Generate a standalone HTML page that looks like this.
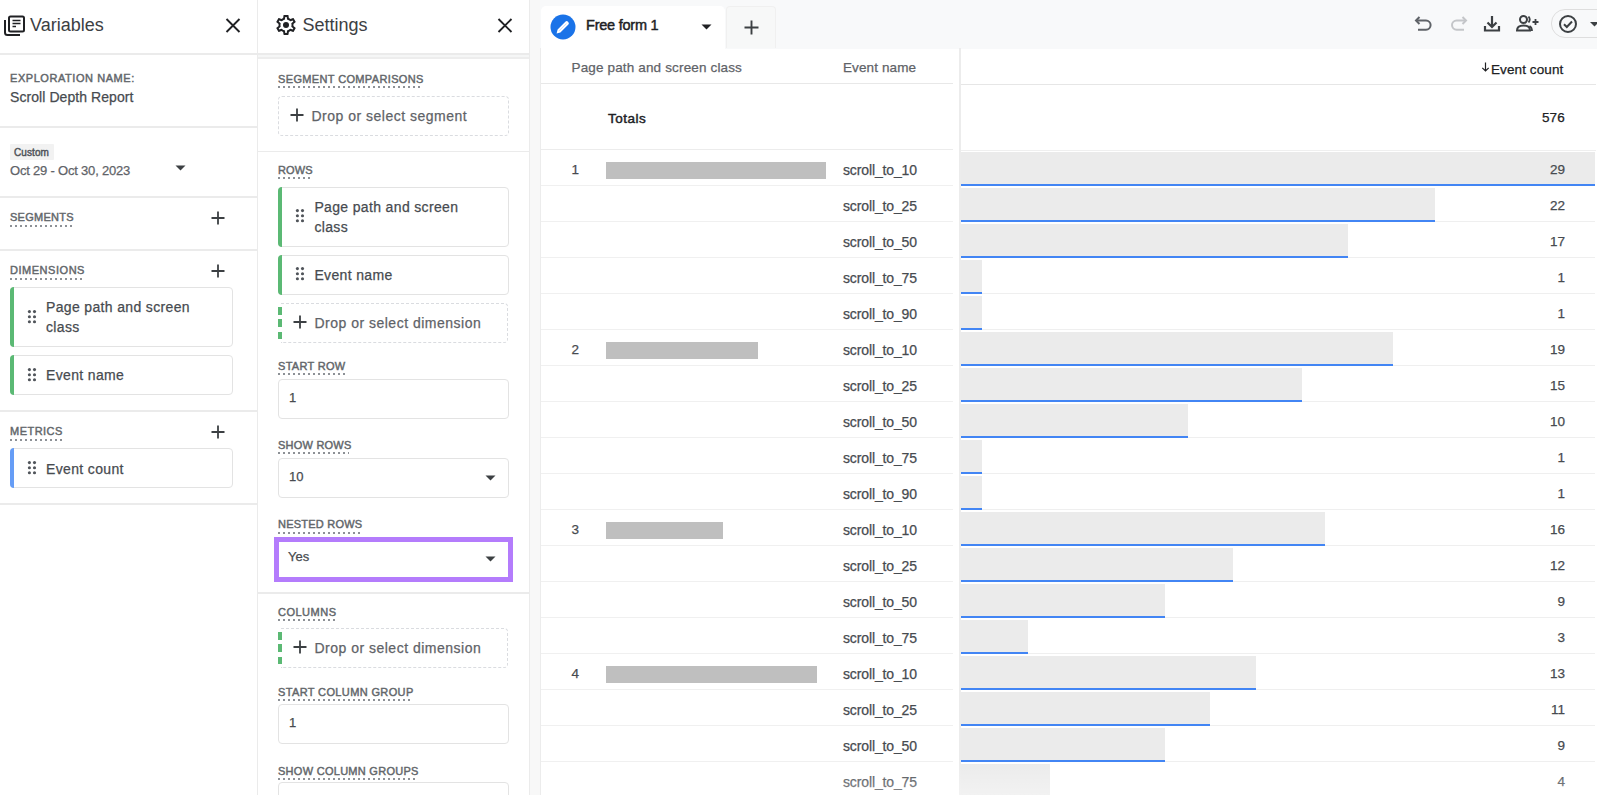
<!DOCTYPE html>
<html><head><meta charset="utf-8"><style>
html,body{margin:0;padding:0;}
body{width:1600px;height:795px;overflow:hidden;position:relative;font-family:"Liberation Sans", sans-serif;background:#f8f9fa;}
.t{position:absolute;white-space:nowrap;}
.b{position:absolute;box-sizing:content-box;}
svg.b{overflow:visible;}
</style></head><body>
<div class="b" style="left:0px;top:0px;width:1600px;height:795px;background:#f8f9fa;"></div>
<div class="b" style="left:0px;top:0px;width:257px;height:795px;background:#fff;"></div>
<div class="b" style="left:258px;top:0px;width:271px;height:795px;background:#fff;"></div>
<div class="b" style="left:257px;top:0px;width:1px;height:795px;background:#ebebeb;"></div>
<div class="b" style="left:529px;top:0px;width:1px;height:795px;background:#ebebeb;"></div>
<div class="b" style="left:530px;top:0px;width:10px;height:795px;background:#f8f8f8;"></div>
<svg class="b" style="left:3px;top:15px" width="23" height="22" viewBox="0 0 23 22">
<path d="M2 5 V17.5 Q2 20 4.5 20 H17" fill="none" stroke="#202124" stroke-width="2"/>
<rect x="6" y="1.5" width="15" height="15" rx="1.5" fill="none" stroke="#202124" stroke-width="2"/>
<path d="M9.5 5.5 H17.5 M9.5 8.5 H17.5 M9.5 11.5 H13" stroke="#202124" stroke-width="1.6"/>
</svg>
<div class="t " style="left:30px;top:16.26px;font-size:18px;line-height:18px;color:#3c4043;font-weight:400;letter-spacing:0px;">Variables</div>
<svg class="b" style="left:224px;top:17px" width="18" height="17" viewBox="0 0 18 17">
<path d="M2.5 2 L15.5 15 M15.5 2 L2.5 15" stroke="#202124" stroke-width="1.9"/></svg>
<div class="b" style="left:0px;top:53px;width:257px;height:2px;background:#ebebeb;"></div>
<div class="t " style="left:10px;top:72.99px;font-size:11px;line-height:11px;color:#63676b;font-weight:400;letter-spacing:0.56px;-webkit-text-stroke:0.45px #63676b;">EXPLORATION NAME:</div>
<div class="t " style="left:10px;top:89.65px;font-size:14px;line-height:14px;color:#474b50;font-weight:400;letter-spacing:0.07px;-webkit-text-stroke:0.25px #474b50;">Scroll Depth Report</div>
<div class="b" style="left:0px;top:126px;width:257px;height:2px;background:#ebebeb;"></div>
<div class="b" style="left:10px;top:144px;width:44px;height:16px;background:#f2f2f2;border-radius:1px;"></div>
<div class="t " style="left:14px;top:147.94px;font-size:10px;line-height:10px;color:#50545a;font-weight:400;letter-spacing:0.1px;-webkit-text-stroke:0.45px #50545a;">Custom</div>
<div class="t " style="left:10px;top:164.00px;font-size:13px;line-height:13px;color:#5f6368;font-weight:400;letter-spacing:-0.2px;-webkit-text-stroke:0.25px #5f6368;">Oct 29 - Oct 30, 2023</div>
<svg class="b" style="left:175px;top:165px" width="11" height="6" viewBox="0 0 11 6"><path d="M0.5 0.5 H10.5 L5.5 5.5 Z" fill="#3c4043"/></svg>
<div class="b" style="left:0px;top:196px;width:257px;height:2px;background:#ebebeb;"></div>
<div class="t " style="left:10px;top:212.19px;font-size:11px;line-height:11px;color:#63676b;font-weight:400;letter-spacing:0.26px;-webkit-text-stroke:0.45px #63676b;">SEGMENTS</div>
<div class="b" style="left:10px;top:224.5px;width:62px;height:2px;background:repeating-linear-gradient(90deg,#8d9196 0 2px,transparent 2px 5px);"></div>
<svg class="b" style="left:211px;top:211px" width="14" height="14" viewBox="0 0 14 14"><path d="M7.0 0.5 V13.5 M0.5 7.0 H13.5" stroke="#3c4043" stroke-width="1.8"/></svg>
<div class="b" style="left:0px;top:249px;width:257px;height:2px;background:#ebebeb;"></div>
<div class="t " style="left:10px;top:265.19px;font-size:11px;line-height:11px;color:#63676b;font-weight:400;letter-spacing:0.53px;-webkit-text-stroke:0.45px #63676b;">DIMENSIONS</div>
<div class="b" style="left:10px;top:277.5px;width:73px;height:2px;background:repeating-linear-gradient(90deg,#8d9196 0 2px,transparent 2px 5px);"></div>
<svg class="b" style="left:211px;top:264px" width="14" height="14" viewBox="0 0 14 14"><path d="M7.0 0.5 V13.5 M0.5 7.0 H13.5" stroke="#3c4043" stroke-width="1.8"/></svg>
<div class="b" style="left:10px;top:287px;width:221px;height:58px;border:1px solid #e3e3e3;border-radius:4px;background:#fff;"></div>
<div class="b" style="left:10px;top:287px;width:4px;height:60px;background:#5bb974;border-radius:4px 0 0 4px;"></div>
<svg class="b" style="left:27px;top:310px" width="10" height="14" viewBox="0 0 10 14" style="overflow:visible"><circle cx="2.4" cy="1.6" r="1.55" fill="#50545a"/><circle cx="7.5" cy="1.6" r="1.55" fill="#50545a"/><circle cx="2.4" cy="6.699999999999999" r="1.55" fill="#50545a"/><circle cx="7.5" cy="6.699999999999999" r="1.55" fill="#50545a"/><circle cx="2.4" cy="11.799999999999999" r="1.55" fill="#50545a"/><circle cx="7.5" cy="11.799999999999999" r="1.55" fill="#50545a"/></svg>
<div class="t " style="left:46px;top:300.15px;font-size:14px;line-height:14px;color:#474b50;font-weight:400;letter-spacing:0.35px;-webkit-text-stroke:0.25px #474b50;">Page path and screen</div>
<div class="t " style="left:46px;top:320.15px;font-size:14px;line-height:14px;color:#474b50;font-weight:400;letter-spacing:0.35px;-webkit-text-stroke:0.25px #474b50;">class</div>
<div class="b" style="left:10px;top:355px;width:221px;height:38px;border:1px solid #e3e3e3;border-radius:4px;background:#fff;"></div>
<div class="b" style="left:10px;top:355px;width:4px;height:40px;background:#5bb974;border-radius:4px 0 0 4px;"></div>
<svg class="b" style="left:27px;top:368px" width="10" height="14" viewBox="0 0 10 14" style="overflow:visible"><circle cx="2.4" cy="1.6" r="1.55" fill="#50545a"/><circle cx="7.5" cy="1.6" r="1.55" fill="#50545a"/><circle cx="2.4" cy="6.699999999999999" r="1.55" fill="#50545a"/><circle cx="7.5" cy="6.699999999999999" r="1.55" fill="#50545a"/><circle cx="2.4" cy="11.799999999999999" r="1.55" fill="#50545a"/><circle cx="7.5" cy="11.799999999999999" r="1.55" fill="#50545a"/></svg>
<div class="t " style="left:46px;top:368.15px;font-size:14px;line-height:14px;color:#474b50;font-weight:400;letter-spacing:0.35px;-webkit-text-stroke:0.25px #474b50;">Event name</div>
<div class="b" style="left:0px;top:410px;width:257px;height:2px;background:#ebebeb;"></div>
<div class="t " style="left:10px;top:426.19px;font-size:11px;line-height:11px;color:#63676b;font-weight:400;letter-spacing:0.48px;-webkit-text-stroke:0.45px #63676b;">METRICS</div>
<div class="b" style="left:10px;top:438.5px;width:52px;height:2px;background:repeating-linear-gradient(90deg,#8d9196 0 2px,transparent 2px 5px);"></div>
<svg class="b" style="left:211px;top:425px" width="14" height="14" viewBox="0 0 14 14"><path d="M7.0 0.5 V13.5 M0.5 7.0 H13.5" stroke="#3c4043" stroke-width="1.8"/></svg>
<div class="b" style="left:10px;top:448px;width:221px;height:38px;border:1px solid #e3e3e3;border-radius:4px;background:#fff;"></div>
<div class="b" style="left:10px;top:448px;width:4px;height:40px;background:#669df6;border-radius:4px 0 0 4px;"></div>
<svg class="b" style="left:27px;top:461px" width="10" height="14" viewBox="0 0 10 14" style="overflow:visible"><circle cx="2.4" cy="1.6" r="1.55" fill="#50545a"/><circle cx="7.5" cy="1.6" r="1.55" fill="#50545a"/><circle cx="2.4" cy="6.699999999999999" r="1.55" fill="#50545a"/><circle cx="7.5" cy="6.699999999999999" r="1.55" fill="#50545a"/><circle cx="2.4" cy="11.799999999999999" r="1.55" fill="#50545a"/><circle cx="7.5" cy="11.799999999999999" r="1.55" fill="#50545a"/></svg>
<div class="t " style="left:46px;top:461.75px;font-size:14px;line-height:14px;color:#474b50;font-weight:400;letter-spacing:0.35px;-webkit-text-stroke:0.25px #474b50;">Event count</div>
<div class="b" style="left:0px;top:503px;width:257px;height:2px;background:#ebebeb;"></div>
<svg class="b" style="left:274px;top:13px" width="24" height="24" viewBox="0 0 24 24">
<path fill="#202124" d="M19.43 12.98c.04-.32.07-.64.07-.98 0-.34-.03-.66-.07-.98l2.11-1.65c.19-.15.24-.42.12-.64l-2-3.46c-.09-.16-.26-.25-.44-.25-.06 0-.12.01-.17.03l-2.49 1c-.52-.4-1.08-.73-1.69-.98l-.38-2.65C14.46 2.18 14.25 2 14 2h-4c-.25 0-.46.18-.49.42l-.38 2.65c-.61.25-1.17.59-1.69.98l-2.49-1c-.06-.02-.12-.03-.18-.03-.17 0-.34.09-.43.25l-2 3.46c-.13.22-.07.49.12.64l2.11 1.65c-.04.32-.07.65-.07.98 0 .33.03.66.07.98l-2.11 1.65c-.19.15-.24.42-.12.64l2 3.46c.09.16.26.25.44.25.06 0 .12-.01.17-.03l2.49-1c.52.4 1.08.73 1.69.98l.38 2.65c.03.24.24.42.49.42h4c.25 0 .46-.18.49-.42l.38-2.650c.61-.25 1.17-.59 1.69-.98l2.49 1c.06.02.12.03.18.03.17 0 .34-.09.43-.25l2-3.460c.12-.22.07-.49-.12-.64l-2.11-1.65zm-1.98-1.71c.04.31.05.52.05.73 0 .21-.02.43-.05.73l-.14 1.13.89.7 1.08.84-.7 1.21-1.27-.51-1.04-.42-.9.68c-.43.32-.84.56-1.25.73l-1.06.43-.16 1.13-.2 1.35h-1.4l-.19-1.35-.16-1.13-1.06-.43c-.43-.18-.83-.41-1.230-.71l-.91-.7-1.06.43-1.27.51-.7-1.21 1.08-.84.89-.7-.14-1.13c-.03-.31-.05-.54-.05-.74s.02-.43.05-.73l.14-1.13-.89-.7-1.08-.84.7-1.21 1.27.51 1.04.42.9-.68c.43-.32.84-.56 1.25-.73l1.06-.43.16-1.13.2-1.35h1.39l.19 1.35.16 1.13 1.06.43c.43.18.83.41 1.23.71l.91.7 1.06-.43 1.27-.51.7 1.21-1.07.85-.89.7.14 1.13z"/>
<circle cx="12" cy="12" r="3" fill="#202124"/></svg>
<div class="t " style="left:302.5px;top:16.46px;font-size:18px;line-height:18px;color:#3c4043;font-weight:400;letter-spacing:0px;">Settings</div>
<svg class="b" style="left:496px;top:17px" width="18" height="17" viewBox="0 0 18 17">
<path d="M2.5 2 L15.5 15 M15.5 2 L2.5 15" stroke="#202124" stroke-width="1.9"/></svg>
<div class="b" style="left:258px;top:53px;width:271px;height:1.5px;background:#ebebeb;"></div>
<div class="b" style="left:258px;top:54.5px;width:271px;height:2.5px;background:#f5f6f6;"></div>
<div class="b" style="left:258px;top:57px;width:271px;height:1.5px;background:#ededed;"></div>
<div class="t " style="left:278px;top:73.79px;font-size:11px;line-height:11px;color:#63676b;font-weight:400;letter-spacing:0.36px;-webkit-text-stroke:0.45px #63676b;">SEGMENT COMPARISONS</div>
<div class="b" style="left:278px;top:86.1px;width:144px;height:2px;background:repeating-linear-gradient(90deg,#8d9196 0 2px,transparent 2px 5px);"></div>
<div class="b" style="left:278px;top:96px;width:229px;height:38px;border:1px dashed #dadce0;border-radius:4px;"></div>
<svg class="b" style="left:290px;top:108px" width="14" height="14" viewBox="0 0 14 14"><path d="M7.0 0.5 V13.5 M0.5 7.0 H13.5" stroke="#3c4043" stroke-width="1.8"/></svg>
<div class="t " style="left:311.5px;top:109.15px;font-size:14px;line-height:14px;color:#5f6368;font-weight:400;letter-spacing:0.5px;-webkit-text-stroke:0.25px #5f6368;">Drop or select segment</div>
<div class="b" style="left:258px;top:150.5px;width:271px;height:1.5px;background:#ebebeb;"></div>
<div class="t " style="left:278px;top:164.79px;font-size:11px;line-height:11px;color:#63676b;font-weight:400;letter-spacing:0.1px;-webkit-text-stroke:0.45px #63676b;">ROWS</div>
<div class="b" style="left:278px;top:177.1px;width:33px;height:2px;background:repeating-linear-gradient(90deg,#8d9196 0 2px,transparent 2px 5px);"></div>
<div class="b" style="left:278px;top:187px;width:229px;height:58px;border:1px solid #e3e3e3;border-radius:4px;background:#fff;"></div>
<div class="b" style="left:278px;top:187px;width:4px;height:60px;background:#5bb974;border-radius:4px 0 0 4px;"></div>
<svg class="b" style="left:295px;top:209px" width="10" height="14" viewBox="0 0 10 14" style="overflow:visible"><circle cx="2.4" cy="1.6" r="1.55" fill="#50545a"/><circle cx="7.5" cy="1.6" r="1.55" fill="#50545a"/><circle cx="2.4" cy="6.699999999999999" r="1.55" fill="#50545a"/><circle cx="7.5" cy="6.699999999999999" r="1.55" fill="#50545a"/><circle cx="2.4" cy="11.799999999999999" r="1.55" fill="#50545a"/><circle cx="7.5" cy="11.799999999999999" r="1.55" fill="#50545a"/></svg>
<div class="t " style="left:314.4px;top:200.15px;font-size:14px;line-height:14px;color:#474b50;font-weight:400;letter-spacing:0.35px;-webkit-text-stroke:0.25px #474b50;">Page path and screen</div>
<div class="t " style="left:314.4px;top:219.75px;font-size:14px;line-height:14px;color:#474b50;font-weight:400;letter-spacing:0.35px;-webkit-text-stroke:0.25px #474b50;">class</div>
<div class="b" style="left:278px;top:255px;width:229px;height:38px;border:1px solid #e3e3e3;border-radius:4px;background:#fff;"></div>
<div class="b" style="left:278px;top:255px;width:4px;height:40px;background:#5bb974;border-radius:4px 0 0 4px;"></div>
<svg class="b" style="left:295px;top:267.3px" width="10" height="14" viewBox="0 0 10 14" style="overflow:visible"><circle cx="2.4" cy="1.6" r="1.55" fill="#50545a"/><circle cx="7.5" cy="1.6" r="1.55" fill="#50545a"/><circle cx="2.4" cy="6.699999999999999" r="1.55" fill="#50545a"/><circle cx="7.5" cy="6.699999999999999" r="1.55" fill="#50545a"/><circle cx="2.4" cy="11.799999999999999" r="1.55" fill="#50545a"/><circle cx="7.5" cy="11.799999999999999" r="1.55" fill="#50545a"/></svg>
<div class="t " style="left:314.4px;top:267.55px;font-size:14px;line-height:14px;color:#474b50;font-weight:400;letter-spacing:0.35px;-webkit-text-stroke:0.25px #474b50;">Event name</div>
<div class="b" style="left:281px;top:303px;width:226px;height:38px;border:1px dashed #dadce0;border-left:none;border-radius:0 4px 4px 0;"></div>
<div class="b" style="left:278px;top:307.0px;width:4px;height:7.5px;background:#5bb974;"></div>
<div class="b" style="left:278px;top:319.3px;width:4px;height:7.5px;background:#5bb974;"></div>
<div class="b" style="left:278px;top:331.6px;width:4px;height:7.5px;background:#5bb974;"></div>
<svg class="b" style="left:293px;top:315px" width="14" height="14" viewBox="0 0 14 14"><path d="M7.0 0.5 V13.5 M0.5 7.0 H13.5" stroke="#3c4043" stroke-width="1.8"/></svg>
<div class="t " style="left:314.4px;top:316.15px;font-size:14px;line-height:14px;color:#5f6368;font-weight:400;letter-spacing:0.5px;-webkit-text-stroke:0.25px #5f6368;">Drop or select dimension</div>
<div class="t " style="left:278px;top:360.79px;font-size:11px;line-height:11px;color:#63676b;font-weight:400;letter-spacing:0.3px;-webkit-text-stroke:0.45px #63676b;">START ROW</div>
<div class="b" style="left:278px;top:373.1px;width:70px;height:2px;background:repeating-linear-gradient(90deg,#8d9196 0 2px,transparent 2px 5px);"></div>
<div class="b" style="left:278px;top:379px;width:229px;height:38px;border:1px solid #e3e3e3;border-radius:4px;background:#fff;"></div>
<div class="t " style="left:289px;top:391.00px;font-size:13px;line-height:13px;color:#474b50;font-weight:400;letter-spacing:0px;-webkit-text-stroke:0.25px #474b50;">1</div>
<div class="t " style="left:278px;top:439.79px;font-size:11px;line-height:11px;color:#63676b;font-weight:400;letter-spacing:0.22px;-webkit-text-stroke:0.45px #63676b;">SHOW ROWS</div>
<div class="b" style="left:278px;top:452.1px;width:71px;height:2px;background:repeating-linear-gradient(90deg,#8d9196 0 2px,transparent 2px 5px);"></div>
<div class="b" style="left:278px;top:458px;width:229px;height:38px;border:1px solid #e3e3e3;border-radius:4px;background:#fff;"></div>
<div class="t " style="left:289px;top:470.00px;font-size:13px;line-height:13px;color:#474b50;font-weight:400;letter-spacing:0px;-webkit-text-stroke:0.25px #474b50;">10</div>
<svg class="b" style="left:485px;top:475px" width="11" height="6" viewBox="0 0 11 6"><path d="M0.5 0.5 H10.5 L5.5 5.5 Z" fill="#3c4043"/></svg>
<div class="t " style="left:278px;top:519.19px;font-size:11px;line-height:11px;color:#63676b;font-weight:400;letter-spacing:0.22px;-webkit-text-stroke:0.45px #63676b;">NESTED ROWS</div>
<div class="b" style="left:278px;top:531.5px;width:83px;height:2px;background:repeating-linear-gradient(90deg,#8d9196 0 2px,transparent 2px 5px);"></div>
<div class="b" style="left:274px;top:537px;width:229px;height:35px;border:5px solid #b47cfc;background:#fff;"></div>
<div class="t " style="left:288px;top:550.40px;font-size:13px;line-height:13px;color:#474b50;font-weight:400;letter-spacing:0px;-webkit-text-stroke:0.25px #474b50;">Yes</div>
<svg class="b" style="left:485px;top:556px" width="11" height="6" viewBox="0 0 11 6"><path d="M0.5 0.5 H10.5 L5.5 5.5 Z" fill="#3c4043"/></svg>
<div class="b" style="left:258px;top:592px;width:271px;height:1.5px;background:#ebebeb;"></div>
<div class="t " style="left:278px;top:606.59px;font-size:11px;line-height:11px;color:#63676b;font-weight:400;letter-spacing:0.5px;-webkit-text-stroke:0.45px #63676b;">COLUMNS</div>
<div class="b" style="left:278px;top:618.9px;width:57px;height:2px;background:repeating-linear-gradient(90deg,#8d9196 0 2px,transparent 2px 5px);"></div>
<div class="b" style="left:281px;top:628px;width:226px;height:38px;border:1px dashed #dadce0;border-left:none;border-radius:0 4px 4px 0;"></div>
<div class="b" style="left:278px;top:632.0px;width:4px;height:7.5px;background:#5bb974;"></div>
<div class="b" style="left:278px;top:644.3px;width:4px;height:7.5px;background:#5bb974;"></div>
<div class="b" style="left:278px;top:656.6px;width:4px;height:7.5px;background:#5bb974;"></div>
<svg class="b" style="left:293px;top:640px" width="14" height="14" viewBox="0 0 14 14"><path d="M7.0 0.5 V13.5 M0.5 7.0 H13.5" stroke="#3c4043" stroke-width="1.8"/></svg>
<div class="t " style="left:314.4px;top:641.15px;font-size:14px;line-height:14px;color:#5f6368;font-weight:400;letter-spacing:0.5px;-webkit-text-stroke:0.25px #5f6368;">Drop or select dimension</div>
<div class="t " style="left:278px;top:686.79px;font-size:11px;line-height:11px;color:#63676b;font-weight:400;letter-spacing:0.37px;-webkit-text-stroke:0.45px #63676b;">START COLUMN GROUP</div>
<div class="b" style="left:278px;top:699.1px;width:134px;height:2px;background:repeating-linear-gradient(90deg,#8d9196 0 2px,transparent 2px 5px);"></div>
<div class="b" style="left:278px;top:703.6px;width:229px;height:38px;border:1px solid #e3e3e3;border-radius:4px;background:#fff;"></div>
<div class="t " style="left:289px;top:715.60px;font-size:13px;line-height:13px;color:#474b50;font-weight:400;letter-spacing:0px;-webkit-text-stroke:0.25px #474b50;">1</div>
<div class="t " style="left:278px;top:765.59px;font-size:11px;line-height:11px;color:#63676b;font-weight:400;letter-spacing:0.28px;-webkit-text-stroke:0.45px #63676b;">SHOW COLUMN GROUPS</div>
<div class="b" style="left:278px;top:777.9px;width:139px;height:2px;background:repeating-linear-gradient(90deg,#8d9196 0 2px,transparent 2px 5px);"></div>
<div class="b" style="left:278px;top:782px;width:229px;height:38px;border:1px solid #e3e3e3;border-radius:4px;background:#fff;"></div>
<div class="b" style="left:541px;top:6px;width:184px;height:44px;background:#fff;border-radius:5px 5px 0 0;"></div>
<div class="b" style="left:726px;top:6px;width:48px;height:41px;background:#f7f8f8;border-radius:4px 4px 0 0;border:1px solid #f0f0f0;border-bottom:none;"></div>
<svg class="b" style="left:550px;top:14px" width="26" height="26" viewBox="0 0 26 26">
<circle cx="13" cy="13" r="12.5" fill="#1a73e8"/>
<path d="M6.6 19.4 L7.6 15.6 L15.6 7.6 Q16.6 6.6 17.8 7.6 L18.4 8.2 Q19.4 9.4 18.4 10.4 L10.4 18.4 Z" fill="#fff"/>
<path d="M9.2 16.8 L16.4 9.6" stroke="#b9d2f8" stroke-width="0.7"/></svg>
<div class="t " style="left:586px;top:18.33px;font-size:14.5px;line-height:14.5px;color:#202124;font-weight:400;letter-spacing:-0.23px;-webkit-text-stroke:0.45px #202124;">Free form 1</div>
<svg class="b" style="left:701px;top:24px" width="11" height="6" viewBox="0 0 11 6"><path d="M0.5 0.5 H10.5 L5.5 5.5 Z" fill="#202124"/></svg>
<svg class="b" style="left:744px;top:20px" width="15" height="15" viewBox="0 0 15 15"><path d="M7.5 0.5 V14.5 M0.5 7.5 H14.5" stroke="#3c4043" stroke-width="1.9"/></svg>
<svg class="b" style="left:1413px;top:14px" width="20" height="20" viewBox="0 0 20 20">
<path d="M3 6.5 H13 A4.6 4.6 0 0 1 13 15.7 H5" fill="none" stroke="#5f6368" stroke-width="2"/>
<path d="M6.5 3 L3 6.5 L6.5 10" fill="none" stroke="#5f6368" stroke-width="2"/></svg>
<svg class="b" style="left:1449px;top:14px" width="20" height="20" viewBox="0 0 20 20">
<path d="M17 6.5 H7.6 A4.6 4.6 0 0 0 7.6 15.7 H15" fill="none" stroke="#c4c6c9" stroke-width="2"/>
<path d="M13.5 3 L17 6.5 L13.5 10" fill="none" stroke="#c4c6c9" stroke-width="2"/></svg>
<svg class="b" style="left:1482px;top:14px" width="20" height="20" viewBox="0 0 20 20">
<path d="M10 2 V13 M5.5 8.5 L10 13 L14.5 8.5" fill="none" stroke="#3c4043" stroke-width="2.2"/>
<path d="M3 12 V16.5 H17 V12" fill="none" stroke="#3c4043" stroke-width="2.2"/></svg>
<svg class="b" style="left:1515px;top:14px" width="27" height="20" viewBox="0 0 27 20">
<circle cx="8.5" cy="5.5" r="3.5" fill="none" stroke="#3c4043" stroke-width="2"/>
<path d="M2 16.5 Q2 11.5 8.5 11.5 Q15 11.5 15 16.5 Z" fill="none" stroke="#3c4043" stroke-width="2"/>
<path d="M13.5 2.5 Q16 5.5 13.5 8.5 M17 17 Q17 13.5 14.5 12" fill="none" stroke="#3c4043" stroke-width="1.8"/>
<path d="M20.5 5 V11 M17.5 8 H23.5" stroke="#3c4043" stroke-width="1.8"/></svg>
<div class="b" style="left:1551px;top:9px;width:60px;height:27px;border:1px solid #dedede;border-radius:14px;"></div>
<svg class="b" style="left:1558px;top:14px" width="20" height="20" viewBox="0 0 20 20">
<circle cx="10" cy="10" r="8" fill="none" stroke="#3c4043" stroke-width="2"/>
<path d="M6 10.3 L8.8 13 L14 7.5" fill="none" stroke="#3c4043" stroke-width="2"/></svg>
<svg class="b" style="left:1590px;top:22px" width="9" height="5" viewBox="0 0 9 5"><path d="M0 0 H9 L4.5 4.5 Z" fill="#3c4043"/></svg>
<div class="b" style="left:1596.5px;top:0px;width:3.5px;height:795px;background:#fff;"></div>
<div class="b" style="left:541px;top:48.5px;width:1056px;height:747px;background:#fff;"></div>
<div class="b" style="left:540px;top:48px;width:1px;height:747px;background:#ececec;"></div>
<div class="b" style="left:959px;top:48px;width:1.5px;height:747px;background:#ececec;"></div>
<div class="t " style="left:571.5px;top:61.07px;font-size:13.5px;line-height:13.5px;color:#5f6368;font-weight:400;letter-spacing:0.15px;-webkit-text-stroke:0.25px #5f6368;">Page path and screen class</div>
<div class="t " style="left:843px;top:60.57px;font-size:13.5px;line-height:13.5px;color:#5f6368;font-weight:400;letter-spacing:0.12px;-webkit-text-stroke:0.25px #5f6368;">Event name</div>
<div class="t " style="left:1491px;top:62.57px;font-size:13.5px;line-height:13.5px;color:#202124;font-weight:400;letter-spacing:0.1px;-webkit-text-stroke:0.25px #202124;">Event count</div>
<svg class="b" style="left:1481px;top:62px" width="9" height="10" viewBox="0 0 9 10"><path d="M4.5 0.5 V9 M1.3 5.8 L4.5 9 L7.7 5.8" fill="none" stroke="#202124" stroke-width="1.2"/></svg>
<div class="b" style="left:541px;top:83px;width:412px;height:1px;background:#e8e8e8;"></div>
<div class="b" style="left:961px;top:83.5px;width:635px;height:1.5px;background:#e6e6e6;"></div>
<div class="t " style="left:608px;top:112.07px;font-size:13.5px;line-height:13.5px;color:#202124;font-weight:400;letter-spacing:0.5px;-webkit-text-stroke:0.45px #202124;">Totals</div>
<div class="t " style="right:35px;text-align:right;top:111.07px;font-size:13.5px;line-height:13.5px;color:#202124;font-weight:400;letter-spacing:0.2px;-webkit-text-stroke:0.25px #202124;">576</div>
<div class="b" style="left:541px;top:149px;width:412px;height:1px;background:#ececec;"></div>
<div class="b" style="left:961px;top:149.5px;width:635px;height:1px;background:#efefef;"></div>
<div class="t " style="left:571.5px;top:163.07px;font-size:13.5px;line-height:13.5px;color:#474b50;font-weight:400;letter-spacing:0px;-webkit-text-stroke:0.25px #474b50;">1</div>
<div class="b" style="left:606px;top:161.5px;width:220px;height:17.5px;background:#bfbfbf;"></div>
<div class="t " style="left:843px;top:162.95px;font-size:14px;line-height:14px;color:#474b50;font-weight:400;letter-spacing:-0.13px;-webkit-text-stroke:0.25px #474b50;">scroll_to_10</div>
<div class="b" style="left:961px;top:152px;width:634px;height:32px;background:#ebebeb;"></div>
<div class="b" style="left:961px;top:184px;width:634px;height:2px;background:#4285f4;"></div>
<div class="t " style="right:35px;text-align:right;top:162.57px;font-size:13.5px;line-height:13.5px;color:#474b50;font-weight:400;letter-spacing:0px;-webkit-text-stroke:0.25px #474b50;">29</div>
<div class="b" style="left:541px;top:185px;width:412px;height:1px;background:#f0f0f0;"></div>
<div class="t " style="left:843px;top:198.95px;font-size:14px;line-height:14px;color:#474b50;font-weight:400;letter-spacing:-0.13px;-webkit-text-stroke:0.25px #474b50;">scroll_to_25</div>
<div class="b" style="left:961px;top:188px;width:474px;height:32px;background:#ebebeb;"></div>
<div class="b" style="left:961px;top:220px;width:474px;height:2px;background:#4285f4;"></div>
<div class="t " style="right:35px;text-align:right;top:198.57px;font-size:13.5px;line-height:13.5px;color:#474b50;font-weight:400;letter-spacing:0px;-webkit-text-stroke:0.25px #474b50;">22</div>
<div class="b" style="left:541px;top:221px;width:412px;height:1px;background:#f0f0f0;"></div>
<div class="b" style="left:1435px;top:221px;width:160px;height:1px;background:#efefef;"></div>
<div class="t " style="left:843px;top:234.95px;font-size:14px;line-height:14px;color:#474b50;font-weight:400;letter-spacing:-0.13px;-webkit-text-stroke:0.25px #474b50;">scroll_to_50</div>
<div class="b" style="left:961px;top:224px;width:387px;height:32px;background:#ebebeb;"></div>
<div class="b" style="left:961px;top:256px;width:387px;height:2px;background:#4285f4;"></div>
<div class="t " style="right:35px;text-align:right;top:234.57px;font-size:13.5px;line-height:13.5px;color:#474b50;font-weight:400;letter-spacing:0px;-webkit-text-stroke:0.25px #474b50;">17</div>
<div class="b" style="left:541px;top:257px;width:412px;height:1px;background:#f0f0f0;"></div>
<div class="b" style="left:1348px;top:257px;width:247px;height:1px;background:#efefef;"></div>
<div class="t " style="left:843px;top:270.95px;font-size:14px;line-height:14px;color:#474b50;font-weight:400;letter-spacing:-0.13px;-webkit-text-stroke:0.25px #474b50;">scroll_to_75</div>
<div class="b" style="left:961px;top:260px;width:21px;height:32px;background:#ebebeb;"></div>
<div class="b" style="left:961px;top:292px;width:21px;height:2px;background:#4285f4;"></div>
<div class="t " style="right:35px;text-align:right;top:270.57px;font-size:13.5px;line-height:13.5px;color:#474b50;font-weight:400;letter-spacing:0px;-webkit-text-stroke:0.25px #474b50;">1</div>
<div class="b" style="left:541px;top:293px;width:412px;height:1px;background:#f0f0f0;"></div>
<div class="b" style="left:982px;top:293px;width:613px;height:1px;background:#efefef;"></div>
<div class="t " style="left:843px;top:306.95px;font-size:14px;line-height:14px;color:#474b50;font-weight:400;letter-spacing:-0.13px;-webkit-text-stroke:0.25px #474b50;">scroll_to_90</div>
<div class="b" style="left:961px;top:296px;width:21px;height:32px;background:#ebebeb;"></div>
<div class="b" style="left:961px;top:328px;width:21px;height:2px;background:#4285f4;"></div>
<div class="t " style="right:35px;text-align:right;top:306.57px;font-size:13.5px;line-height:13.5px;color:#474b50;font-weight:400;letter-spacing:0px;-webkit-text-stroke:0.25px #474b50;">1</div>
<div class="b" style="left:541px;top:329px;width:412px;height:1px;background:#f0f0f0;"></div>
<div class="b" style="left:982px;top:329px;width:613px;height:1px;background:#efefef;"></div>
<div class="t " style="left:571.5px;top:343.07px;font-size:13.5px;line-height:13.5px;color:#474b50;font-weight:400;letter-spacing:0px;-webkit-text-stroke:0.25px #474b50;">2</div>
<div class="b" style="left:606px;top:341.5px;width:152px;height:17.5px;background:#bfbfbf;"></div>
<div class="t " style="left:843px;top:342.95px;font-size:14px;line-height:14px;color:#474b50;font-weight:400;letter-spacing:-0.13px;-webkit-text-stroke:0.25px #474b50;">scroll_to_10</div>
<div class="b" style="left:961px;top:332px;width:432px;height:32px;background:#ebebeb;"></div>
<div class="b" style="left:961px;top:364px;width:432px;height:2px;background:#4285f4;"></div>
<div class="t " style="right:35px;text-align:right;top:342.57px;font-size:13.5px;line-height:13.5px;color:#474b50;font-weight:400;letter-spacing:0px;-webkit-text-stroke:0.25px #474b50;">19</div>
<div class="b" style="left:541px;top:365px;width:412px;height:1px;background:#f0f0f0;"></div>
<div class="b" style="left:1393px;top:365px;width:202px;height:1px;background:#efefef;"></div>
<div class="t " style="left:843px;top:378.95px;font-size:14px;line-height:14px;color:#474b50;font-weight:400;letter-spacing:-0.13px;-webkit-text-stroke:0.25px #474b50;">scroll_to_25</div>
<div class="b" style="left:961px;top:368px;width:341px;height:32px;background:#ebebeb;"></div>
<div class="b" style="left:961px;top:400px;width:341px;height:2px;background:#4285f4;"></div>
<div class="t " style="right:35px;text-align:right;top:378.57px;font-size:13.5px;line-height:13.5px;color:#474b50;font-weight:400;letter-spacing:0px;-webkit-text-stroke:0.25px #474b50;">15</div>
<div class="b" style="left:541px;top:401px;width:412px;height:1px;background:#f0f0f0;"></div>
<div class="b" style="left:1302px;top:401px;width:293px;height:1px;background:#efefef;"></div>
<div class="t " style="left:843px;top:414.95px;font-size:14px;line-height:14px;color:#474b50;font-weight:400;letter-spacing:-0.13px;-webkit-text-stroke:0.25px #474b50;">scroll_to_50</div>
<div class="b" style="left:961px;top:404px;width:227px;height:32px;background:#ebebeb;"></div>
<div class="b" style="left:961px;top:436px;width:227px;height:2px;background:#4285f4;"></div>
<div class="t " style="right:35px;text-align:right;top:414.57px;font-size:13.5px;line-height:13.5px;color:#474b50;font-weight:400;letter-spacing:0px;-webkit-text-stroke:0.25px #474b50;">10</div>
<div class="b" style="left:541px;top:437px;width:412px;height:1px;background:#f0f0f0;"></div>
<div class="b" style="left:1188px;top:437px;width:407px;height:1px;background:#efefef;"></div>
<div class="t " style="left:843px;top:450.95px;font-size:14px;line-height:14px;color:#474b50;font-weight:400;letter-spacing:-0.13px;-webkit-text-stroke:0.25px #474b50;">scroll_to_75</div>
<div class="b" style="left:961px;top:440px;width:21px;height:32px;background:#ebebeb;"></div>
<div class="b" style="left:961px;top:472px;width:21px;height:2px;background:#4285f4;"></div>
<div class="t " style="right:35px;text-align:right;top:450.57px;font-size:13.5px;line-height:13.5px;color:#474b50;font-weight:400;letter-spacing:0px;-webkit-text-stroke:0.25px #474b50;">1</div>
<div class="b" style="left:541px;top:473px;width:412px;height:1px;background:#f0f0f0;"></div>
<div class="b" style="left:982px;top:473px;width:613px;height:1px;background:#efefef;"></div>
<div class="t " style="left:843px;top:486.95px;font-size:14px;line-height:14px;color:#474b50;font-weight:400;letter-spacing:-0.13px;-webkit-text-stroke:0.25px #474b50;">scroll_to_90</div>
<div class="b" style="left:961px;top:476px;width:21px;height:32px;background:#ebebeb;"></div>
<div class="b" style="left:961px;top:508px;width:21px;height:2px;background:#4285f4;"></div>
<div class="t " style="right:35px;text-align:right;top:486.57px;font-size:13.5px;line-height:13.5px;color:#474b50;font-weight:400;letter-spacing:0px;-webkit-text-stroke:0.25px #474b50;">1</div>
<div class="b" style="left:541px;top:509px;width:412px;height:1px;background:#f0f0f0;"></div>
<div class="b" style="left:982px;top:509px;width:613px;height:1px;background:#efefef;"></div>
<div class="t " style="left:571.5px;top:523.07px;font-size:13.5px;line-height:13.5px;color:#474b50;font-weight:400;letter-spacing:0px;-webkit-text-stroke:0.25px #474b50;">3</div>
<div class="b" style="left:606px;top:521.5px;width:117px;height:17.5px;background:#bfbfbf;"></div>
<div class="t " style="left:843px;top:522.95px;font-size:14px;line-height:14px;color:#474b50;font-weight:400;letter-spacing:-0.13px;-webkit-text-stroke:0.25px #474b50;">scroll_to_10</div>
<div class="b" style="left:961px;top:512px;width:364px;height:32px;background:#ebebeb;"></div>
<div class="b" style="left:961px;top:544px;width:364px;height:2px;background:#4285f4;"></div>
<div class="t " style="right:35px;text-align:right;top:522.57px;font-size:13.5px;line-height:13.5px;color:#474b50;font-weight:400;letter-spacing:0px;-webkit-text-stroke:0.25px #474b50;">16</div>
<div class="b" style="left:541px;top:545px;width:412px;height:1px;background:#f0f0f0;"></div>
<div class="b" style="left:1325px;top:545px;width:270px;height:1px;background:#efefef;"></div>
<div class="t " style="left:843px;top:558.95px;font-size:14px;line-height:14px;color:#474b50;font-weight:400;letter-spacing:-0.13px;-webkit-text-stroke:0.25px #474b50;">scroll_to_25</div>
<div class="b" style="left:961px;top:548px;width:272px;height:32px;background:#ebebeb;"></div>
<div class="b" style="left:961px;top:580px;width:272px;height:2px;background:#4285f4;"></div>
<div class="t " style="right:35px;text-align:right;top:558.57px;font-size:13.5px;line-height:13.5px;color:#474b50;font-weight:400;letter-spacing:0px;-webkit-text-stroke:0.25px #474b50;">12</div>
<div class="b" style="left:541px;top:581px;width:412px;height:1px;background:#f0f0f0;"></div>
<div class="b" style="left:1233px;top:581px;width:362px;height:1px;background:#efefef;"></div>
<div class="t " style="left:843px;top:594.95px;font-size:14px;line-height:14px;color:#474b50;font-weight:400;letter-spacing:-0.13px;-webkit-text-stroke:0.25px #474b50;">scroll_to_50</div>
<div class="b" style="left:961px;top:584px;width:204px;height:32px;background:#ebebeb;"></div>
<div class="b" style="left:961px;top:616px;width:204px;height:2px;background:#4285f4;"></div>
<div class="t " style="right:35px;text-align:right;top:594.57px;font-size:13.5px;line-height:13.5px;color:#474b50;font-weight:400;letter-spacing:0px;-webkit-text-stroke:0.25px #474b50;">9</div>
<div class="b" style="left:541px;top:617px;width:412px;height:1px;background:#f0f0f0;"></div>
<div class="b" style="left:1165px;top:617px;width:430px;height:1px;background:#efefef;"></div>
<div class="t " style="left:843px;top:630.95px;font-size:14px;line-height:14px;color:#474b50;font-weight:400;letter-spacing:-0.13px;-webkit-text-stroke:0.25px #474b50;">scroll_to_75</div>
<div class="b" style="left:961px;top:620px;width:67px;height:32px;background:#ebebeb;"></div>
<div class="b" style="left:961px;top:652px;width:67px;height:2px;background:#4285f4;"></div>
<div class="t " style="right:35px;text-align:right;top:630.57px;font-size:13.5px;line-height:13.5px;color:#474b50;font-weight:400;letter-spacing:0px;-webkit-text-stroke:0.25px #474b50;">3</div>
<div class="b" style="left:541px;top:653px;width:412px;height:1px;background:#f0f0f0;"></div>
<div class="b" style="left:1028px;top:653px;width:567px;height:1px;background:#efefef;"></div>
<div class="t " style="left:571.5px;top:667.07px;font-size:13.5px;line-height:13.5px;color:#474b50;font-weight:400;letter-spacing:0px;-webkit-text-stroke:0.25px #474b50;">4</div>
<div class="b" style="left:606px;top:665.5px;width:211px;height:17.5px;background:#bfbfbf;"></div>
<div class="t " style="left:843px;top:666.95px;font-size:14px;line-height:14px;color:#474b50;font-weight:400;letter-spacing:-0.13px;-webkit-text-stroke:0.25px #474b50;">scroll_to_10</div>
<div class="b" style="left:961px;top:656px;width:295px;height:32px;background:#ebebeb;"></div>
<div class="b" style="left:961px;top:688px;width:295px;height:2px;background:#4285f4;"></div>
<div class="t " style="right:35px;text-align:right;top:666.57px;font-size:13.5px;line-height:13.5px;color:#474b50;font-weight:400;letter-spacing:0px;-webkit-text-stroke:0.25px #474b50;">13</div>
<div class="b" style="left:541px;top:689px;width:412px;height:1px;background:#f0f0f0;"></div>
<div class="b" style="left:1256px;top:689px;width:339px;height:1px;background:#efefef;"></div>
<div class="t " style="left:843px;top:702.95px;font-size:14px;line-height:14px;color:#474b50;font-weight:400;letter-spacing:-0.13px;-webkit-text-stroke:0.25px #474b50;">scroll_to_25</div>
<div class="b" style="left:961px;top:692px;width:249px;height:32px;background:#ebebeb;"></div>
<div class="b" style="left:961px;top:724px;width:249px;height:2px;background:#4285f4;"></div>
<div class="t " style="right:35px;text-align:right;top:702.57px;font-size:13.5px;line-height:13.5px;color:#474b50;font-weight:400;letter-spacing:0px;-webkit-text-stroke:0.25px #474b50;">11</div>
<div class="b" style="left:541px;top:725px;width:412px;height:1px;background:#f0f0f0;"></div>
<div class="b" style="left:1210px;top:725px;width:385px;height:1px;background:#efefef;"></div>
<div class="t " style="left:843px;top:738.95px;font-size:14px;line-height:14px;color:#474b50;font-weight:400;letter-spacing:-0.13px;-webkit-text-stroke:0.25px #474b50;">scroll_to_50</div>
<div class="b" style="left:961px;top:728px;width:204px;height:32px;background:#ebebeb;"></div>
<div class="b" style="left:961px;top:760px;width:204px;height:2px;background:#4285f4;"></div>
<div class="t " style="right:35px;text-align:right;top:738.57px;font-size:13.5px;line-height:13.5px;color:#474b50;font-weight:400;letter-spacing:0px;-webkit-text-stroke:0.25px #474b50;">9</div>
<div class="b" style="left:541px;top:761px;width:412px;height:1px;background:#f0f0f0;"></div>
<div class="b" style="left:1165px;top:761px;width:430px;height:1px;background:#efefef;"></div>
<div class="t " style="left:843px;top:774.95px;font-size:14px;line-height:14px;color:#474b50;font-weight:400;letter-spacing:-0.13px;-webkit-text-stroke:0.25px #474b50;">scroll_to_75</div>
<div class="b" style="left:961px;top:764px;width:89px;height:32px;background:#ebebeb;"></div>
<div class="b" style="left:961px;top:796px;width:89px;height:2px;background:#4285f4;"></div>
<div class="t " style="right:35px;text-align:right;top:774.57px;font-size:13.5px;line-height:13.5px;color:#474b50;font-weight:400;letter-spacing:0px;-webkit-text-stroke:0.25px #474b50;">4</div>
<div class="b" style="left:541px;top:797px;width:412px;height:1px;background:#f0f0f0;"></div>
<div class="b" style="left:1050px;top:797px;width:545px;height:1px;background:#efefef;"></div>
<div class="b" style="left:541px;top:762px;width:1054px;height:33px;background:linear-gradient(rgba(255,255,255,0),rgba(255,255,255,0.35));"></div>
</body></html>
